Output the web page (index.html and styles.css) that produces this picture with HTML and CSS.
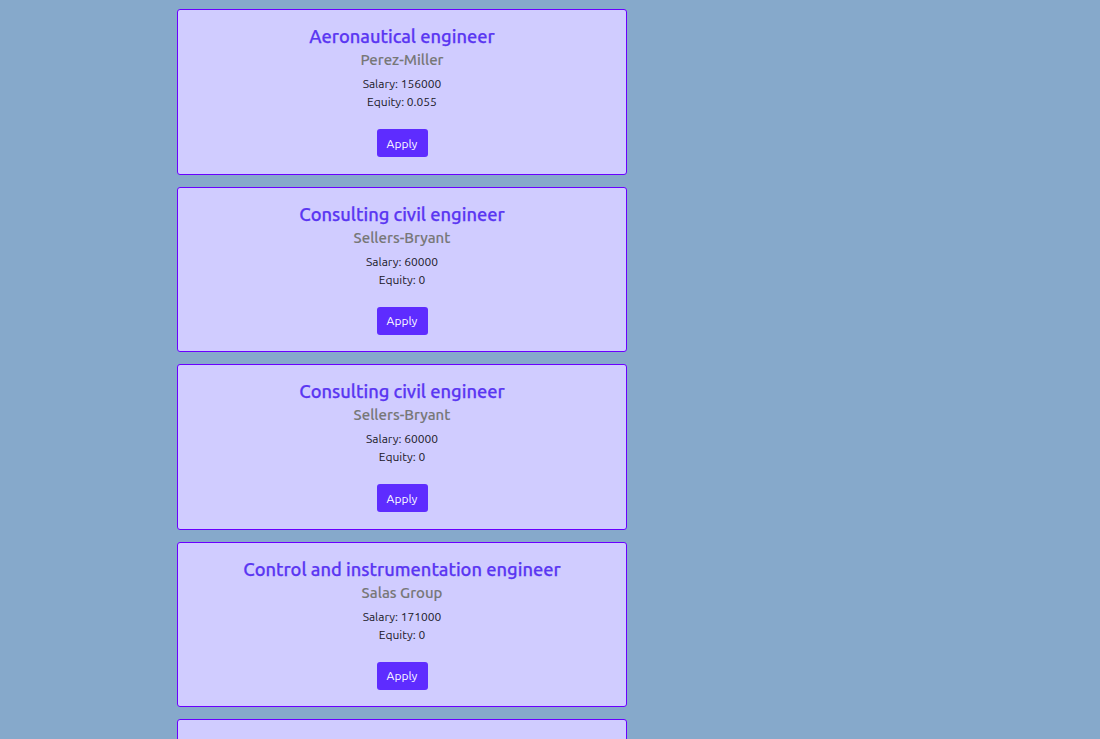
FILE: index.html
```html
<!DOCTYPE html>
<html>
<head>
<meta charset="utf-8">
<link rel="stylesheet" href="styles.css">
</head>
<body>
<div class="list">
  <div class="card">
    <h2 class="title">Aeronautical engineer</h2>
    <h3 class="company">Perez-Miller</h3>
    <p class="info">Salary: 156000</p>
    <p class="info">Equity: 0.055</p>
    <button class="apply">Apply</button>
  </div>
  <div class="card">
    <h2 class="title">Consulting civil engineer</h2>
    <h3 class="company">Sellers-Bryant</h3>
    <p class="info">Salary: 60000</p>
    <p class="info">Equity: 0</p>
    <button class="apply">Apply</button>
  </div>
  <div class="card">
    <h2 class="title">Consulting civil engineer</h2>
    <h3 class="company">Sellers-Bryant</h3>
    <p class="info">Salary: 60000</p>
    <p class="info">Equity: 0</p>
    <button class="apply">Apply</button>
  </div>
  <div class="card">
    <h2 class="title">Control and instrumentation engineer</h2>
    <h3 class="company">Salas Group</h3>
    <p class="info">Salary: 171000</p>
    <p class="info">Equity: 0</p>
    <button class="apply">Apply</button>
  </div>
  <div class="card">
    <h2 class="title">Engineer, energy</h2>
    <h3 class="company">Salas Group</h3>
    <p class="info">Salary: 120000</p>
    <p class="info">Equity: 0</p>
    <button class="apply">Apply</button>
  </div>
</div>
</body>
</html>
```

FILE: styles.css
```css
html, body {
  margin: 0;
  padding: 0;
  background: #86a9cb;
  font-family: "Ubuntu", "Noto Sans", "Open Sans", sans-serif;
}
.list {
  display: flex;
  flex-direction: column;
  gap: 12px;
  width: 450px;
  padding: 9px 0 0 177px;
}
.card {
  box-sizing: border-box;
  height: 165.5px;
  flex-shrink: 0;
  background: #d0ccff;
  border: 1px solid #6a00ff;
  border-radius: 3px;
  display: flex;
  flex-direction: column;
  align-items: center;
  padding-top: 14px;
}
.title {
  margin: 0;
  font-size: 18.3px;
  line-height: 24px;
  font-weight: 500;
  color: #5a36f2;
  -webkit-text-stroke: 0.25px #5a36f2;
}
.company {
  margin: 1px 0 4px;
  font-size: 15px;
  line-height: 22px;
  font-weight: 500;
  color: #777777;
  -webkit-text-stroke: 0.1px #777777;
}
.info {
  margin: 0;
  font-size: 12px;
  line-height: 18px;
  color: #1a1828;
}
.info + .info {
  margin-bottom: 18px;
}
.apply {
  height: 28px;
  width: 51px;
  flex-shrink: 0;
  padding: 0;
  border: none;
  border-radius: 3px;
  background: #5e2cff;
  color: #ffffff;
  font-family: inherit;
  font-size: 12px;
}
```
